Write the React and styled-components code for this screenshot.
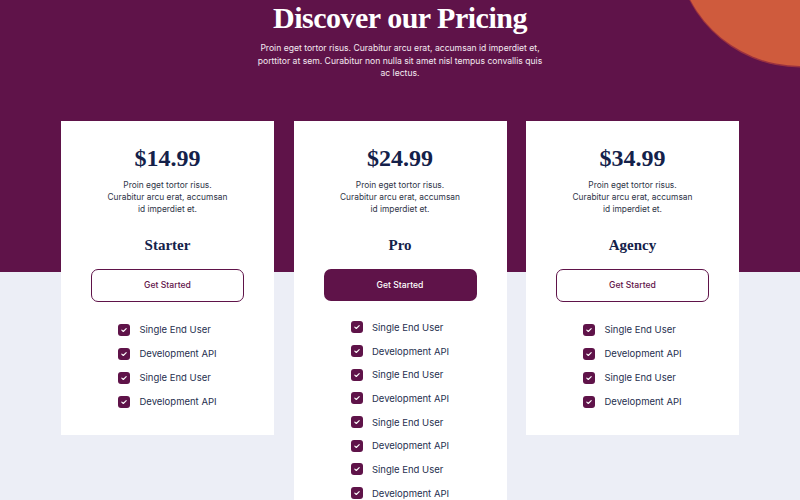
import React from "react";
import styled, { createGlobalStyle } from "styled-components";

const PURPLE = "#5f1349";
const NAVY = "#14214a";
const LIGHT = "#eceef6";

const Global = createGlobalStyle`
  html, body { margin: 0; padding: 0; overflow: hidden; }
  body { font-family: Inter, "Noto Sans", sans-serif; background: ${LIGHT}; }
  * { box-sizing: border-box; }
`;

const Page = styled.div`
  position: relative;
  width: 800px;
  height: 500px;
  overflow: hidden;
  background: linear-gradient(to bottom, ${PURPLE} 0, ${PURPLE} 272px, ${LIGHT} 272px);
  display: flex;
  flex-direction: column;
  align-items: center;
`;

const Circle = styled.div`
  position: absolute;
  left: 676px;
  top: -182px;
  width: 248px;
  height: 248px;
  border-radius: 50%;
  background: #cf5b3d;
  box-shadow: 0 1px 0 0.5px #9a3140;
`;

const Title = styled.h1`
  position: relative;
  margin: 0;
  font-family: "Liberation Serif", serif;
  font-weight: 700;
  font-size: 30px;
  line-height: 36px;
  letter-spacing: -0.5px;
  color: #ffffff;
  text-align: center;
`;

const Lead = styled.p`
  position: relative;
  margin: 6px 0 0;
  max-width: 290px;
  font-size: 8.6px;
  line-height: 12.5px;
  color: #f4eaf1;
  text-align: center;
`;

const Cards = styled.div`
  display: grid;
  grid-template-columns: repeat(3, 213px);
  column-gap: 19.5px;
  align-items: start;
  margin-top: 41px;
`;

const Card = styled.div`
  background: #ffffff;
  padding: 22px 30px 21px;
  display: flex;
  flex-direction: column;
  align-items: center;
`;

const Price = styled.div`
  font-family: "Liberation Serif", serif;
  font-weight: 700;
  font-size: 24px;
  line-height: 30px;
  color: ${NAVY};
`;

const Desc = styled.p`
  margin: 6px 0 0;
  max-width: 125px;
  font-size: 8.4px;
  line-height: 12px;
  color: #2f3548;
  text-align: center;
`;

const PlanName = styled.h3`
  margin: 20px 0 0;
  font-family: "Liberation Serif", serif;
  font-weight: 700;
  font-size: 15px;
  line-height: 20px;
  color: ${NAVY};
`;

const Button = styled.button`
  margin-top: 14px;
  width: 100%;
  height: ${(p) => (p.$filled ? "32px" : "33px")};
  border-radius: 7px;
  border: ${(p) => (p.$filled ? "none" : `1.5px solid ${PURPLE}`)};
  background: ${(p) => (p.$filled ? PURPLE : "#ffffff")};
  color: ${(p) => (p.$filled ? "#ffffff" : PURPLE)};
  font-family: Inter, sans-serif;
  font-weight: 500;
  font-size: 8.6px;
  cursor: pointer;
`;

const Features = styled.ul`
  list-style: none;
  margin: ${(p) => (p.$tight ? "15px" : "16px")} 0 0;
  padding: 0;
  display: flex;
  flex-direction: column;
`;

const Feature = styled.li`
  display: flex;
  align-items: center;
  gap: 9px;
  height: ${(p) => (p.$tight ? "23.7px" : "24px")};
  font-size: 9.5px;
  color: #26304f;
`;

const Check = styled.span`
  width: 12px;
  height: 12px;
  border-radius: 3px;
  background: ${PURPLE};
  display: flex;
  align-items: center;
  justify-content: center;
  flex: none;
`;

const CheckIcon = () => (
  <Check>
    <svg width="8" height="8" viewBox="0 0 8 8">
      <path d="M1.8 4.1 L3.3 5.5 L6.2 2.6" fill="none" stroke="#ffffff" strokeWidth="1.1" strokeLinecap="round" strokeLinejoin="round" />
    </svg>
  </Check>
);

const plans = [
  { price: "$14.99", name: "Starter", rows: 4 },
  { price: "$24.99", name: "Pro", rows: 8, filled: true },
  { price: "$34.99", name: "Agency", rows: 4 },
];

const feats = ["Single End User", "Development API"];

export default function App() {
  return (
    <>
      <Global />
      <Page>
        <Circle />
        <Title>Discover our Pricing</Title>
        <Lead>
          Proin eget tortor risus. Curabitur arcu erat, accumsan id imperdiet et,
          porttitor at sem. Curabitur non nulla sit amet nisl tempus convallis quis
          ac lectus.
        </Lead>
        <Cards>
          {plans.map((p) => (
            <Card key={p.name}>
              <Price>{p.price}</Price>
              <Desc>Proin eget tortor risus. Curabitur arcu erat, accumsan id imperdiet et.</Desc>
              <PlanName>{p.name}</PlanName>
              <Button $filled={p.filled}>Get Started</Button>
              <Features $tight={p.filled}>
                {Array.from({ length: p.rows }).map((_, i) => (
                  <Feature key={i} $tight={p.filled}>
                    <CheckIcon />
                    {feats[i % 2]}
                  </Feature>
                ))}
              </Features>
            </Card>
          ))}
        </Cards>
      </Page>
    </>
  );
}
